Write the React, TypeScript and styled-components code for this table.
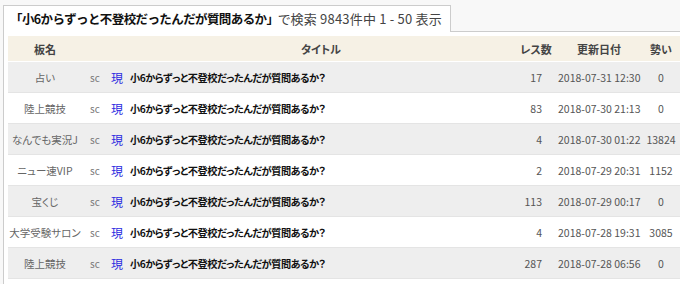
import { FunctionComponent } from 'react';
import styled, { createGlobalStyle } from 'styled-components';

const GlobalStyle = createGlobalStyle`
  body {
    margin: 0;
    background: #f8f8f8;
    font-family: "Noto Sans CJK JP", "Noto Sans", sans-serif;
    font-feature-settings: "palt";
    color: #333;
  }
`;

interface Thread {
  board: string;
  res: number;
  date: string;
  ikioi: number;
}

const TITLE = '小6からずっと不登校だったんだが質問あるか？';

const threads: Thread[] = [
  { board: '占い', res: 17, date: '2018-07-31 12:30', ikioi: 0 },
  { board: '陸上競技', res: 83, date: '2018-07-30 21:13', ikioi: 0 },
  { board: 'なんでも実況J', res: 4, date: '2018-07-30 01:22', ikioi: 13824 },
  { board: 'ニュー速VIP', res: 2, date: '2018-07-29 20:31', ikioi: 1152 },
  { board: '宝くじ', res: 113, date: '2018-07-29 00:17', ikioi: 0 },
  { board: '大学受験サロン', res: 4, date: '2018-07-28 19:31', ikioi: 3085 },
  { board: '陸上競技', res: 287, date: '2018-07-28 06:56', ikioi: 0 },
];

const App: FunctionComponent = () => {
  return (
    <Page>
      <GlobalStyle />
      <SearchTab>
        <Keyword>「小6からずっと不登校だったんだが質問あるか」</Keyword>で検索 9843件中 1 - 50 表示
      </SearchTab>
      <Panel>
        <ResultTable>
          <colgroup>
            <col style={{ width: 74 }} />
            <col style={{ width: 26 }} />
            <col style={{ width: 18 }} />
            <col />
            <col style={{ width: 40 }} />
            <col style={{ width: 86 }} />
            <col style={{ width: 38 }} />
          </colgroup>
          <thead>
            <tr>
              <Th>板名</Th>
              <Th />
              <Th />
              <Th>タイトル</Th>
              <Th>レス数</Th>
              <Th>更新日付</Th>
              <Th>勢い</Th>
            </tr>
          </thead>
          <tbody>
            {threads.map((t, i) => (
              <Row key={i} $odd={i % 2 === 0}>
                <BoardCell>{t.board}</BoardCell>
                <ScCell>sc</ScCell>
                <GenCell>現</GenCell>
                <TitleCell>{TITLE}</TitleCell>
                <ResCell>{t.res}</ResCell>
                <DateCell>{t.date}</DateCell>
                <IkioiCell>{t.ikioi}</IkioiCell>
              </Row>
            ))}
          </tbody>
        </ResultTable>
      </Panel>
    </Page>
  );
};

export default App;

const Page = styled.div`
  padding: 5px 0 0 3px;
  overflow: hidden;
`;

const SearchTab = styled.div`
  display: inline-block;
  box-sizing: border-box;
  height: 27px;
  line-height: 25px;
  padding: 0 8px 0 6px;
  background: #fff;
  border: 1px solid #ccc;
  border-bottom: none;
  font-size: 13px;
  color: #444;
  white-space: nowrap;
  margin-bottom: -1px;
  position: relative;
  letter-spacing: 0.2px;
`;

const Keyword = styled.span`
  font-weight: bold;
  color: #111;
  font-size: 12.5px;
  font-feature-settings: normal;
  letter-spacing: -0.6px;
`;

const Panel = styled.div`
  background: #fff;
  border-top: 1px solid #ccc;
  border-left: 1px solid #ccc;
  padding: 4px 0 0 4px;
  min-height: 260px;
`;

const ResultTable = styled.table`
  width: 100%;
  border-collapse: collapse;
  table-layout: fixed;
  font-size: 10px;
`;

const Th = styled.th`
  height: 25px;
  padding: 0;
  background: #f6f1e5;
  border-bottom: 1px solid #fff;
  font-weight: bold;
  font-size: 11px;
  color: #444;
  text-align: center;
  white-space: nowrap;
`;

const Row = styled.tr<{ $odd: boolean }>`
  height: 31px;
  background: ${(p) => (p.$odd ? '#eeeeee' : '#ffffff')};
  border-bottom: 1px solid #e4e4e4;
`;

const Cell = styled.td`
  padding: 0;
  white-space: nowrap;
  vertical-align: middle;
`;

const BoardCell = styled(Cell)`
  text-align: center;
  color: #666;
  font-size: 10.5px;
`;

const ScCell = styled(Cell)`
  text-align: center;
  color: #777;
  font-size: 10px;
`;

const GenCell = styled(Cell)`
  text-align: center;
  color: #2a2ae0;
  font-size: 12px;
`;

const TitleCell = styled(Cell)`
  padding-left: 4px;
  font-weight: bold;
  color: #111;
  font-size: 10.2px;
  letter-spacing: -0.5px;
`;

const ResCell = styled(Cell)`
  text-align: right;
  padding-right: 14px;
  color: #555;
  font-size: 10.5px;
`;

const DateCell = styled(Cell)`
  padding-left: 2px;
  color: #555;
  font-size: 10.5px;
`;

const IkioiCell = styled(Cell)`
  text-align: center;
  color: #555;
  font-size: 10.5px;
`;
